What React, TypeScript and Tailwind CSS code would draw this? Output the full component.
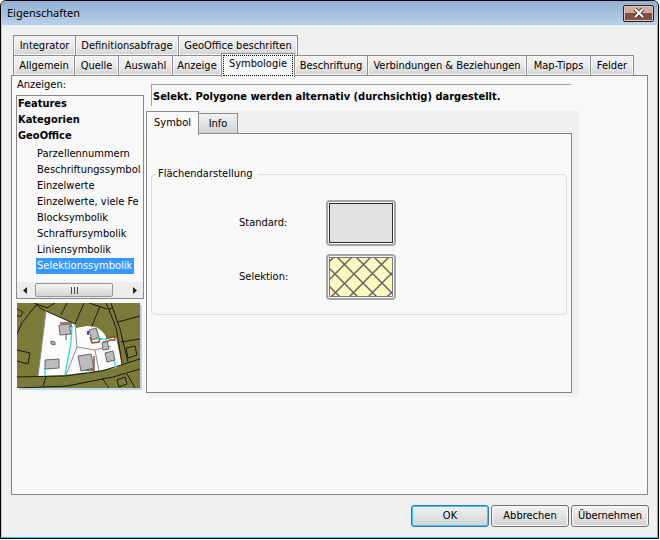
import React from 'react';

type TabItem = { label: string; width: string };

const TABS_BACK: TabItem[] = [
  { label: 'Integrator', width: 'w-[63px]' },
  { label: 'Definitionsabfrage', width: 'w-[104px]' },
  { label: 'GeoOffice beschriften', width: 'w-[120px]' },
];

const TABS_FRONT: TabItem[] = [
  { label: 'Allgemein', width: 'w-[62px]' },
  { label: 'Quelle', width: 'w-[45px]' },
  { label: 'Auswahl', width: 'w-[55px]' },
  { label: 'Anzeige', width: 'w-[50px]' },
  { label: 'Symbologie', width: 'w-[74px]' },
  { label: 'Beschriftung', width: 'w-[74px]' },
  { label: 'Verbindungen & Beziehungen', width: 'w-[160px]' },
  { label: 'Map-Tipps', width: 'w-[65px]' },
  { label: 'Felder', width: 'w-[44px]' },
];

const GROUPS = ['Features', 'Kategorien', 'GeoOffice'];

const SYMBOLOGIES = [
  'Parzellennummern',
  'Beschriftungssymbol',
  'Einzelwerte',
  'Einzelwerte, viele Fe',
  'Blocksymbolik',
  'Schraffursymbolik',
  'Liniensymbolik',
  'Selektionssymbolik',
];

function Tab({ item, active, onSelect }: { item: TabItem; active: boolean; onSelect: () => void }) {
  return (
    <button
      role="tab"
      aria-selected={active}
      onClick={onSelect}
      className={`-mr-px shrink-0 whitespace-nowrap border border-[#898c95] ${item.width} ${
        active
          ? 'z-10 -mt-0.5 -mb-px h-6 border-b-0 bg-[#f8f8f8] p-px'
          : 'h-[21px] bg-linear-to-b from-[#f2f2f2] via-[#ebebeb] to-[#d2d2d2] inset-ring inset-ring-[#f6f6f6]'
      }`}
    >
      {active ? (
        <span className="block h-full border border-dotted border-black leading-[16px]">{item.label}</span>
      ) : (
        item.label
      )}
    </button>
  );
}

function MapPreview() {
  return (
    <svg viewBox="0 0 123 85" className="block h-[85px] w-[123px] bg-[#7b7b39] shadow-[2px_2px_0_#b9d3ee]">
      <path d="M29 8L58 21L59 25L70 23L79 24Q87 28 90 36L99 34L104 58L104 62L98 65L72 69L48 72L21 73Z" fill="#fbfbfb" />
      <g fill="none" stroke="#1c1c10" strokeWidth="1">
        <path d="M0 31L5 20L19 2L28 8M17 0L30 5L38 0M29 8L58 21M44 12L50 0M58 21L67 0M75 23L83 3M72 0L90 6" />
        <path d="M89 0L99 24L105 60M94 0L103 26L111 59M101 19L123 13M104 39L123 36M91 7L96 4" />
        <path d="M0 74L48 73L85 68L123 56M0 85L50 83L96 74L123 66M26 83L29 74M85 75L92 85M110 71L118 85" />
        <path d="M0 47L13 50L11 61L0 58M0 6L6 9L3 14L0 12M109 45L118 43L120 52L111 55ZM100 77L108 74L110 81L102 84Z" />
      </g>
      <g fill="none" stroke="#8d8d8d" strokeWidth="1">
        <path d="M58 22L60 44L49 72M60 44L78 47L94 43M78 47L82 68M29 8L21 73" />
      </g>
      <g fill="none" stroke="#35dced" strokeWidth="1.4">
        <path d="M47 24H55L54 39L48 72M28 65V73M79 36H90M71 67V70M97 57L99 65" />
      </g>
      <g fill="none" stroke="#8b4a38" strokeWidth="1.4">
        <path d="M43 20H54V24M73 34L75 40L82 39L83 35M77 53V67H66M86 39L92 38M89 35L98 34V37H92" />
      </g>
      <g fill="#bcbcbc" stroke="#666" strokeWidth="1">
        <path d="M42 22L52 21L54 31L43 32ZM28 57L42 56V65L28 66ZM61 53L74 51L77 65L64 68ZM72 27L79 25L82 34L75 37ZM85 40L90 38L92 46L86 47ZM88 50L96 48L98 57L90 59ZM34 38L38 39V42L34 41Z" />
      </g>
      <path d="M49 32V37" stroke="#555" />
      <path d="M71 28V32" stroke="#8b20a8" strokeWidth="2" />
    </svg>
  );
}

function Arrow({ d }: { d: string }) {
  return (
    <svg viewBox="0 0 4 7" className="h-[7px] w-1">
      <path d={d} fill="#222" />
    </svg>
  );
}

function SymbolRow({ label, children }: { label: string; children: React.ReactNode }) {
  const id = `symbol-${label}`;
  return (
    <div className="flex items-center">
      <label htmlFor={id} className="w-[87px]">{label}:</label>
      <button id={id} className="h-[46px] w-[70px] rounded-sm border-2 border-[#a5a5a5] p-px">
        {children}
      </button>
    </div>
  );
}

function DialogButton({ children, primary }: { children: React.ReactNode; primary?: boolean }) {
  return (
    <button
      className={`h-[22px] w-[78px] rounded-[3px] border bg-linear-to-b from-[#f3f3f3] to-[#d2d2d2] ${
        primary ? 'border-[#2f78bd] inset-ring inset-ring-[#35c6fa]' : 'border-[#707070] inset-ring inset-ring-[#fafafa]'
      }`}
    >
      {children}
    </button>
  );
}

export default function App() {
  const [tab, setTab] = React.useState('Symbologie');
  const [innerTab, setInnerTab] = React.useState('Symbol');
  const [symbology, setSymbology] = React.useState('Selektionssymbolik');

  return (
    <div className="bg-white pr-px pb-px font-['DejaVu_Sans_Condensed','DejaVu_Sans',sans-serif] text-[11px] leading-4 text-black [font-stretch:condensed]">
      <div className="rounded-t-md border border-black bg-[#f0f0f0] pb-[11px] shadow-[inset_-1px_-1px_0_#35c6ee,inset_1px_0_0_#b9d1ea]">
        <header className="flex h-6 items-center justify-between rounded-t-md bg-linear-to-b from-[#91b0d2] to-[#b9d1ea] pr-1 pl-1.5">
          <h1 className="font-['Noto_Sans','Open_Sans',sans-serif] text-[11px] [font-stretch:normal]">Eigenschaften</h1>
          <button
            aria-label="Schließen"
            className="flex h-[17px] w-[31px] items-center justify-center rounded-xs border border-[#2e1f1f] bg-linear-to-b from-[#cdaa9c] from-50% to-[#805043] to-50% inset-ring inset-ring-[#e0c4b8]"
          >
            <svg viewBox="0 0 12 10" className="h-2.5 w-3">
              <path d="M2 1L10 9M10 1L2 9" stroke="#45383a" strokeWidth="4" />
              <path d="M2 1L10 9M10 1L2 9" stroke="#fff" strokeWidth="2" />
            </svg>
          </button>
        </header>

        <main className="px-2.5 pt-2.5">
          <div role="tablist" className="pl-0.5">
            <div className="flex">
              {TABS_BACK.map(item => (
                <Tab key={item.label} item={item} active={tab === item.label} onSelect={() => setTab(item.label)} />
              ))}
            </div>
            <div className="-mt-px flex">
              {TABS_FRONT.map(item => (
                <Tab key={item.label} item={item} active={tab === item.label} onSelect={() => setTab(item.label)} />
              ))}
            </div>
          </div>

          <section className="-mt-px flex h-[420px] border border-[#82858e] bg-[#f8f8f8] pl-1">
            <div className="w-32 shrink-0">
              <div id="show-label" className="pt-px pl-px">Anzeigen:</div>
              <div className="mt-0.5 h-[204px] border border-[#828790]">
                <ul aria-labelledby="show-label" className="h-[186px] pl-px">
                  {GROUPS.map(group => (
                    <li key={group} className="font-bold">{group}</li>
                  ))}
                  <li className="pt-0.5 pl-[18px]">
                    <ul>
                      {SYMBOLOGIES.map(name => (
                        <li key={name}>
                          <button
                            onClick={() => setSymbology(name)}
                            className={`block w-[98px] pl-px text-left whitespace-nowrap ${
                              symbology === name ? 'bg-[#3399ff] text-white' : ''
                            }`}
                          >
                            {name}
                          </button>
                        </li>
                      ))}
                    </ul>
                  </li>
                </ul>
                <div className="flex h-4 items-center bg-[#ececec] pr-1.5 pl-1.5">
                  <Arrow d="M4 0V7L0 3.5Z" />
                  <div className="ml-2 flex h-3.5 w-[78px] items-center justify-center gap-0.5 rounded-xs border border-[#979797] bg-linear-to-b from-[#f5f5f5] to-[#d5d5d5]">
                    <i className="h-[7px] w-px bg-[#444]" />
                    <i className="h-[7px] w-px bg-[#444]" />
                    <i className="h-[7px] w-px bg-[#444]" />
                  </div>
                  <span className="ml-auto"><Arrow d="M0 0V7L4 3.5Z" /></span>
                </div>
              </div>
              <div className="pt-1 pl-px">
                <MapPreview />
              </div>
            </div>

            <div className="mr-[68px] ml-0.5 min-w-0 flex-1 pt-2">
              <p className="mr-2 ml-[5px] h-[22px] border-t border-l border-[#a0a0a0] pt-1 pl-px font-bold whitespace-nowrap">
                Selekt. Polygone werden alternativ (durchsichtig) dargestellt.
              </p>
              <div className="mt-[5px] bg-[#f0f0f0] pr-[7px] pb-1">
                <div role="tablist" className="flex items-end">
                  {['Symbol', 'Info'].map(name => (
                    <button
                      key={name}
                      role="tab"
                      aria-selected={innerTab === name}
                      onClick={() => setInnerTab(name)}
                      className={`border border-[#898c95] ${
                        innerTab === name
                          ? 'z-10 -mb-px h-6 w-[53px] border-b-0 bg-[#f8f8f8] pb-0.5'
                          : '-ml-px h-[21px] w-10 bg-linear-to-b from-[#f2f2f2] to-[#d2d2d2]'
                      }`}
                    >
                      {name}
                    </button>
                  ))}
                </div>
                <div className="-mt-px h-[260px] border border-[#82858e] bg-[#f8f8f8] px-1 pt-8">
                  <fieldset className="h-[149px] rounded border border-[#d5dfe5] pl-1">
                    <legend className="px-0.5">
                      <span className="pr-1">Flächendarstellung</span>
                    </legend>
                    <div className="flex flex-col gap-2 pt-[18px] pl-[83px]">
                      <SymbolRow label="Standard">
                        <span className="block h-full border border-[#303030] bg-[#e1e1e1]" />
                      </SymbolRow>
                      <SymbolRow label="Selektion">
                        <svg viewBox="0 0 64 40" className="block h-full w-full bg-[#fafac0]">
                          <path
                            d="M0 29L11 40M0 11L29 40M8 0L48 40M27 0L64 37M45 0L64 19M0 5L5 0M0 23L23 0M2 40L42 0M20 40L60 0M39 40L64 15M58 40L64 34"
                            stroke="#6d6060"
                            strokeWidth="1.5"
                          />
                          <path d="M0.5 0.5H63.5V39.5H0.5Z" fill="none" stroke="#777" />
                        </svg>
                      </SymbolRow>
                    </div>
                  </fieldset>
                </div>
              </div>
            </div>
          </section>
        </main>

        <footer className="flex justify-end gap-0.5 pt-2.5 pr-[9px]">
          <DialogButton primary>OK</DialogButton>
          <DialogButton>Abbrechen</DialogButton>
          <DialogButton>Übernehmen</DialogButton>
        </footer>
      </div>
    </div>
  );
}
